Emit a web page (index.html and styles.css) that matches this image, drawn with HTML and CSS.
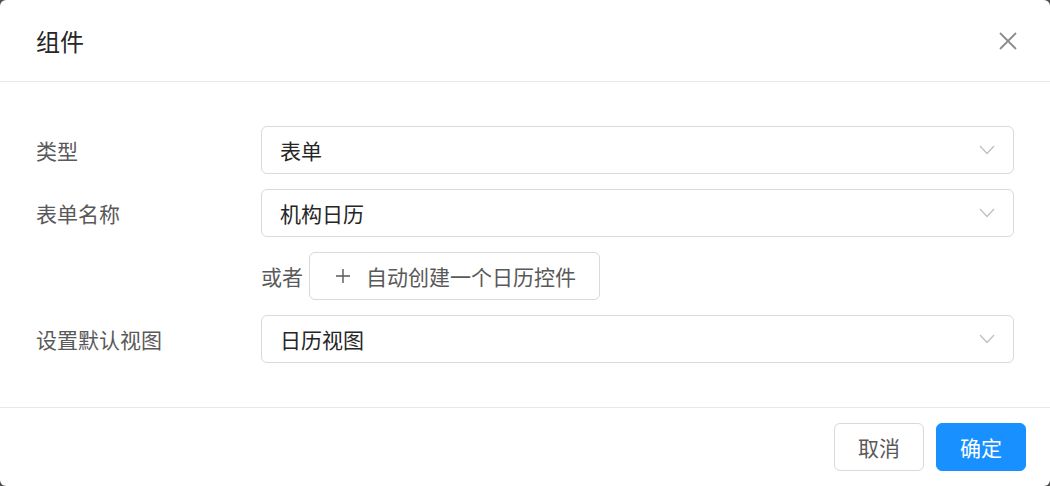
FILE: index.html
```html
<!doctype html>
<html lang="zh-CN">
	<head>
		<meta charset="UTF-8" />
		<meta name="viewport" content="width=device-width, initial-scale=1.0" />
		<title>组件</title>
		<link rel="stylesheet" href="styles.css">
	</head>
	<body>
		<div class="modal">
			<div class="modal-header">
				<div class="modal-title">组件</div>
				<button class="close-btn" aria-label="关闭">
					<svg width="18" height="18" viewBox="0 0 18 18">
						<path d="M1 1 L17 17 M17 1 L1 17" stroke="#8c8c8c" stroke-width="1.8" fill="none" />
					</svg>
				</button>
			</div>

			<div class="modal-body">
				<div class="form-row">
					<div class="form-label">类型</div>
					<div class="select">
						<span class="select-value">表单</span>
						<svg class="select-arrow" width="16" height="10" viewBox="0 0 16 10">
							<path d="M1 1 L8 8.5 L15 1" stroke="#bfbfbf" stroke-width="1.3" fill="none" />
						</svg>
					</div>
				</div>

				<div class="form-row">
					<div class="form-label">表单名称</div>
					<div class="select">
						<span class="select-value">机构日历</span>
						<svg class="select-arrow" width="16" height="10" viewBox="0 0 16 10">
							<path d="M1 1 L8 8.5 L15 1" stroke="#bfbfbf" stroke-width="1.3" fill="none" />
						</svg>
					</div>
				</div>

				<div class="form-row">
					<div class="form-label"></div>
					<div class="create-line">
						<span class="or-text">或者</span>
						<button class="btn btn-create">
							<svg width="14" height="14" viewBox="0 0 14 14">
								<path d="M7 0 V14 M0 7 H14" stroke="#595959" stroke-width="1.4" fill="none" />
							</svg>
							<span>自动创建一个日历控件</span>
						</button>
					</div>
				</div>

				<div class="form-row">
					<div class="form-label">设置默认视图</div>
					<div class="select">
						<span class="select-value">日历视图</span>
						<svg class="select-arrow" width="16" height="10" viewBox="0 0 16 10">
							<path d="M1 1 L8 8.5 L15 1" stroke="#bfbfbf" stroke-width="1.3" fill="none" />
						</svg>
					</div>
				</div>
			</div>

			<div class="modal-footer">
				<button class="btn btn-footer">取消</button>
				<button class="btn btn-footer btn-primary">确定</button>
			</div>
		</div>
	</body>
</html>
```

FILE: styles.css
```css
* {
	margin: 0;
	padding: 0;
	box-sizing: border-box;
}

body {
	font-family: "Noto Sans CJK SC", "Noto Sans", sans-serif;
	background: #4d4d4d;
	width: 1050px;
	height: 486px;
	overflow: hidden;
}

.modal {
	width: 1050px;
	height: 486px;
	background: #fff;
	border-radius: 6px;
	display: flex;
	flex-direction: column;
}

.modal-header {
	display: flex;
	justify-content: space-between;
	align-items: center;
	padding: 24px 36px;
	border-bottom: 1px solid #e8e8e8;
}

.modal-title {
	font-size: 24px;
	line-height: 33px;
	color: #262626;
}

.close-btn {
	border: none;
	background: none;
	width: 18px;
	height: 18px;
	margin-right: -3px;
	display: flex;
	cursor: pointer;
}

.modal-body {
	padding: 44px 36px;
	display: flex;
	flex-direction: column;
	gap: 15px;
}

.form-row {
	display: grid;
	grid-template-columns: 225px 1fr;
	align-items: center;
	height: 48px;
}

.form-label {
	font-size: 21px;
	color: #595959;
	line-height: 30px;
}

.select {
	height: 48px;
	border: 1.5px solid #d9d9d9;
	border-radius: 6px;
	display: flex;
	align-items: center;
	justify-content: space-between;
	padding: 0 18px 0 18px;
}

.select-value {
	font-size: 21px;
	color: #262626;
	line-height: 30px;
}

.create-line {
	display: flex;
	align-items: center;
	gap: 6px;
}

.or-text {
	font-size: 21px;
	color: #595959;
	line-height: 30px;
}

.btn {
	height: 48px;
	padding: 0 22.5px;
	font-family: inherit;
	font-size: 21px;
	color: #595959;
	background: #fff;
	border: 1.5px solid #d9d9d9;
	border-radius: 6px;
	display: inline-flex;
	align-items: center;
	justify-content: center;
	gap: 16px;
	cursor: pointer;
}

.btn-create {
	width: 291px;
	padding-left: 26px;
	justify-content: flex-start;
}

.btn-footer {
	width: 90px;
	padding: 0;
}

.btn-primary {
	background: #1890ff;
	border-color: #1890ff;
	color: #fff;
}

.modal-footer {
	margin-top: auto;
	border-top: 1px solid #e8e8e8;
	padding: 15px 24px;
	display: flex;
	justify-content: flex-end;
	gap: 12px;
}
```
